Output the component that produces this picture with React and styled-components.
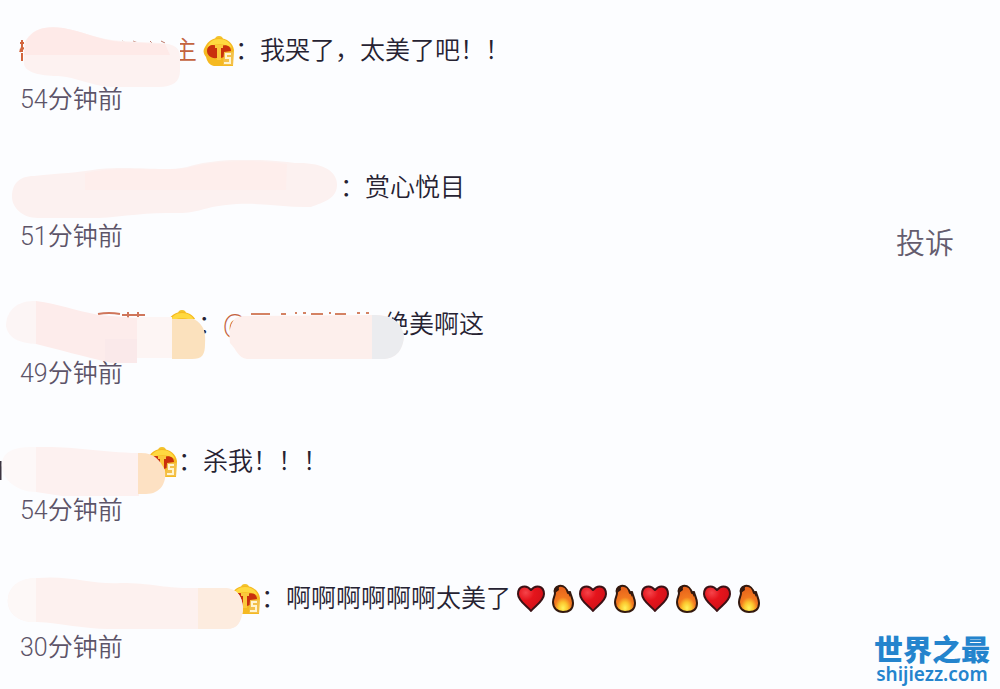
import React from "react";
import styled, { createGlobalStyle } from "styled-components";

const Global = createGlobalStyle`
  body {
    margin: 0;
    background: #fcfdff;
    color: #262232;
    font-family: Roboto, "Noto Sans CJK SC", sans-serif;
    font-size: 25px;
    font-weight: 350;
    line-height: 34px;
  }
`;

const Page = styled.main`
  position: relative;
  overflow: hidden;
  min-height: 100vh;
  box-sizing: border-box;
  padding: 34px 46px 20px 20px;
`;

const List = styled.ul`
  display: flex;
  flex-direction: column;
  gap: 54px;
  margin: 0;
  padding: 0;
  list-style: none;
`;

const Comment = styled.li`
  position: relative;
  display: flex;
  flex-direction: column;
  gap: 15px;
`;

const Line = styled.div`
  display: flex;
  align-items: center;
  height: 34px;
  white-space: nowrap;
`;

const Author = styled.span`
  display: flex;
  align-items: center;
  justify-content: flex-end;
  gap: 6px;
  width: ${(p) => p.$width}px;
  color: #c4643f;
`;

const Mention = styled.span`
  width: 161px;
  color: #c4643f;
`;

const Meta = styled.div`
  display: flex;
  align-items: flex-start;
  justify-content: space-between;
  height: 34px;
`;

const Time = styled.time`
  color: #5c5468;
`;

const Report = styled.button`
  margin: 0;
  padding: 0;
  border: 0;
  background: none;
  color: #645c6e;
  font: inherit;
  font-size: 29px;
  line-height: 48px;
  cursor: pointer;
`;

const Smudge = styled.svg`
  position: absolute;
  left: -20px;
  top: -11px;
  pointer-events: none;
`;

const BadgeIcon = styled.svg`
  flex: none;
`;

const EmojiGroup = styled.span`
  display: flex;
  margin-left: 6px;
`;

const Emoji = styled.svg`
  flex: none;
`;

const Watermark = styled.a`
  position: absolute;
  right: 10px;
  bottom: 4px;
  display: flex;
  flex-direction: column;
  align-items: center;
  color: #2484cd;
  text-decoration: none;
`;

const SiteName = styled.span`
  font-family: "Noto Sans CJK SC", sans-serif;
  font-size: 29px;
  font-weight: 900;
  line-height: 30px;
`;

const SiteHost = styled.span`
  font-family: "Noto Sans", sans-serif;
  font-size: 19px;
  font-weight: 600;
  line-height: 22px;
`;

const Badge = () => (
  <BadgeIcon width="32" height="32" viewBox="0 0 32 32" aria-hidden="true">
    <circle cx="16" cy="5" r="4" fill="#f3c32c" />
    <path d="M16 3 C24 3 30 8 31 15 L30 31 L11 31 C6 30 4 26 3 22 C0 18 0 15 2 12 C5 6 10 3 16 3 Z" fill="#f5b921" />
    <path d="M16 4 C22 4 27 7 29 13 C23 8 9 8 4 13 C6 7 10 4 16 4 Z" fill="#ffd940" />
    <path d="M4 16 C4 10 10 9 14 11 L14 23 C8 24 4 20 4 16 Z" fill="#c9300d" />
    <path d="M18 11 C23 9 28 11 28 16 L21 17 V22 L18 23 Z" fill="#c9300d" />
    <path d="M12 10 H20 V13 H18 V25 H14 V13 H12 Z" fill="#fbc83c" />
    <path d="M21 17 H30 V30 H20 Z" fill="#f3c04a" />
    <path d="M28 19 H23 V23 H27 V28 H21" fill="none" stroke="#fff4cf" strokeWidth="2" />
  </BadgeIcon>
);

const Heart = () => (
  <Emoji width="31" height="32" viewBox="0 0 31 32" role="img" aria-label="红心">
    <defs>
      <radialGradient id="heart" cx="0.3" cy="0.25" r="0.8">
        <stop offset="0" stopColor="#f5444a" />
        <stop offset="0.4" stopColor="#e5141c" />
        <stop offset="1" stopColor="#cf1018" />
      </radialGradient>
    </defs>
    <path
      d="M14 28 C10 23 1 18 1 11 C1 3 9 1 14 7 C19 1 27 3 27 11 C27 18 18 23 14 28 Z"
      fill="url(#heart)"
      stroke="#3b1216"
      strokeWidth="2"
      strokeLinejoin="round"
    />
  </Emoji>
);

const Fire = () => (
  <Emoji width="31" height="32" viewBox="0 0 31 32" role="img" aria-label="火">
    <defs>
      <radialGradient id="fire" cx="0.5" cy="0.85" r="0.75">
        <stop offset="0" stopColor="#fff45c" />
        <stop offset="0.3" stopColor="#fcc52e" />
        <stop offset="0.55" stopColor="#f37a20" />
        <stop offset="1" stopColor="#e8641c" />
      </radialGradient>
    </defs>
    <path
      d="M11 3 C16 2 19 6 20 10 L22 9 C23 13 25 16 25 20 C25 26 21 29 15 29 C9 29 5 25 5 19 C5 15 7 13 7 10 C6 7 7 4 11 3 Z"
      fill="url(#fire)"
      stroke="#33190f"
      strokeWidth="2"
      strokeLinejoin="round"
    />
    <path d="M13 2 Q7 3 7 10 L11 7 Q10 4 13 2 Z M19 8 L23 9 L22 14 Z" fill="#33190f" />
  </Emoji>
);

const FirstSmudge = () => (
  <Smudge width="420" height="90" aria-hidden="true">
    <path d="M22 17 V29 M20 20 H24 M20 27 L24 25 M22 24 L20 29 M22 30 V38" stroke="#d3653d" strokeWidth="2" fill="none" />
    <path d="M122 18 L126 20 M133 18 L138 20 M150 18 L152 20 M161 18 L165 20" stroke="#bd7767" strokeWidth="1" />
    <path d="M173 14 H180 V40 H173 Z" fill="#fcfdff" />
    <path d="M24 21 C31 5 46 3 63 5 C83 8 98 17 122 18 L160 20 C175 21 180 25 180 34 V48 C180 59 172 64 159 64 H112 C90 63 77 54 58 53 C39 53 25 49 24 41 Z" fill="#fdf2f1" />
    <path d="M26 18 C34 5 46 3 63 5 C83 8 98 17 122 19 L165 21 L170 32 H24 Z" fill="#feeae8" />
  </Smudge>
);

const SecondSmudge = () => (
  <Smudge width="420" height="90" aria-hidden="true">
    <path d="M34 16 C60 13 77 13 99 9 C140 6 164 12 187 7 C218 -3 266 -1 295 3 C324 2 338 12 337 26 C336 39 324 42 311 47 C284 48 258 41 226 45 C203 47 198 54 174 53 C139 52 113 59 83 58 H38 C22 58 12 47 12 37 C12 25 18 16 34 16 Z" fill="#fcf1f0" />
    <path d="M85 13 C120 5 158 12 187 8 C218 -1 266 0 287 4 L286 30 H85 Z" fill="#feeeec" />
  </Smudge>
);

const ThirdSmudge = () => (
  <Smudge width="420" height="90" aria-hidden="true">
    <path d="M98 17 Q109 15 120 17 M122 18 H145 M128 15 V21 M138 15 V21" stroke="#cf765b" strokeWidth="2" fill="none" />
    <path d="M168 22 H202 V44 H168 Z" fill="#fcfdff" />
    <path d="M36 4 C15 3 6 16 6 29 C8 41 19 46 36 47 Z" fill="#fcf5f5" />
    <path d="M136 20 H172 V61 H136 Z" fill="#fdf5f4" />
    <path d="M36 4 C59 7 73 13 99 18 L137 21 V66 H112 C82 59 60 53 36 47 Z" fill="#fdeceb" />
    <path d="M105 42 H137 V66 H112 L105 64 Z" fill="#fae9ea" />
    <path d="M172 22 H194 C204 28 206 35 205 47 C205 58 202 62 192 62 H172 Z" fill="#fbe1bd" />
    <path d="M251 17 H270 M281 17 H286 M295 16 H297 M303 16 H306 M311 17 H323 M329 16 H331 M335 17 H346 M357 16 H360 M366 16 H369" stroke="#d48263" strokeWidth="2" />
    <path d="M233 24 C236 19 242 19 249 19 L376 18 C391 18 401 24 404 39 C403 52 397 62 382 62 H247 C238 61 237 53 230 46 C229 38 229 31 233 24 Z" fill="#fdefec" />
    <path d="M372 18 C391 18 401 24 404 39 C403 52 397 62 382 62 H372 Z" fill="#ebecef" />
  </Smudge>
);

const FourthSmudge = () => (
  <Smudge width="420" height="90" aria-hidden="true">
    <path d="M0 27 V46" stroke="#3c3440" strokeWidth="3" />
    <path d="M36 13 C76 12 97 18 139 19 V62 H62 L36 58 Z" fill="#fdf1f0" />
    <path d="M2 28 C4 17 15 12 36 13 V58 C17 58 0 45 2 28 Z" fill="#fdf8f8" />
    <path d="M138 19 C154 18 159 25 165 36 C167 49 160 60 146 60 H138 Z" fill="#fde1c3" />
  </Smudge>
);

const FifthSmudge = () => (
  <Smudge width="420" height="90" aria-hidden="true">
    <path d="M8 27 C10 13 24 7 38 7 C70 4 94 14 121 12 C151 12 163 17 188 17 H224 C238 17 243 27 243 39 C241 51 238 58 226 58 H113 C89 59 62 52 37 51 C17 52 6 40 8 27 Z" fill="#fdf1ef" />
    <path d="M8 27 C10 13 22 7 36 7 V51 C17 52 6 40 8 27 Z" fill="#fdf8f7" />
    <path d="M198 17 H224 C238 17 243 27 243 39 C241 51 238 58 226 58 H198 Z" fill="#fdecdf" />
  </Smudge>
);

export default function App() {
  return (
    <>
      <Global />
      <Page lang="zh-CN">
        <List>
          <Comment>
            <Line>
              <Author $width={215}>主<Badge /></Author>
              <span>：我哭了，太美了吧！！</span>
            </Line>
            <Meta><Time>54分钟前</Time></Meta>
            <FirstSmudge />
          </Comment>
          <Comment>
            <Line>
              <Author $width={320} />
              <span>：赏心悦目</span>
            </Line>
            <Meta>
              <Time>51分钟前</Time>
              <Report type="button">投诉</Report>
            </Meta>
            <SecondSmudge />
          </Comment>
          <Comment>
            <Line>
              <Author $width={178}><Badge /></Author>
              <span>：</span>
              <Mention>@</Mention>
              <span>绝美啊这</span>
            </Line>
            <Meta><Time>49分钟前</Time></Meta>
            <ThirdSmudge />
          </Comment>
          <Comment>
            <Line>
              <Author $width={158}><Badge /></Author>
              <span>：杀我！！！</span>
            </Line>
            <Meta><Time>54分钟前</Time></Meta>
            <FourthSmudge />
          </Comment>
          <Comment>
            <Line>
              <Author $width={241}><Badge /></Author>
              <span>：啊啊啊啊啊啊太美了</span>
              <EmojiGroup>
                <Heart /><Fire /><Heart /><Fire /><Heart /><Fire /><Heart /><Fire />
              </EmojiGroup>
            </Line>
            <Meta><Time>30分钟前</Time></Meta>
            <FifthSmudge />
          </Comment>
        </List>
        <Watermark href="#">
          <SiteName>世界之最</SiteName>
          <SiteHost>shijiezz.com</SiteHost>
        </Watermark>
      </Page>
    </>
  );
}
